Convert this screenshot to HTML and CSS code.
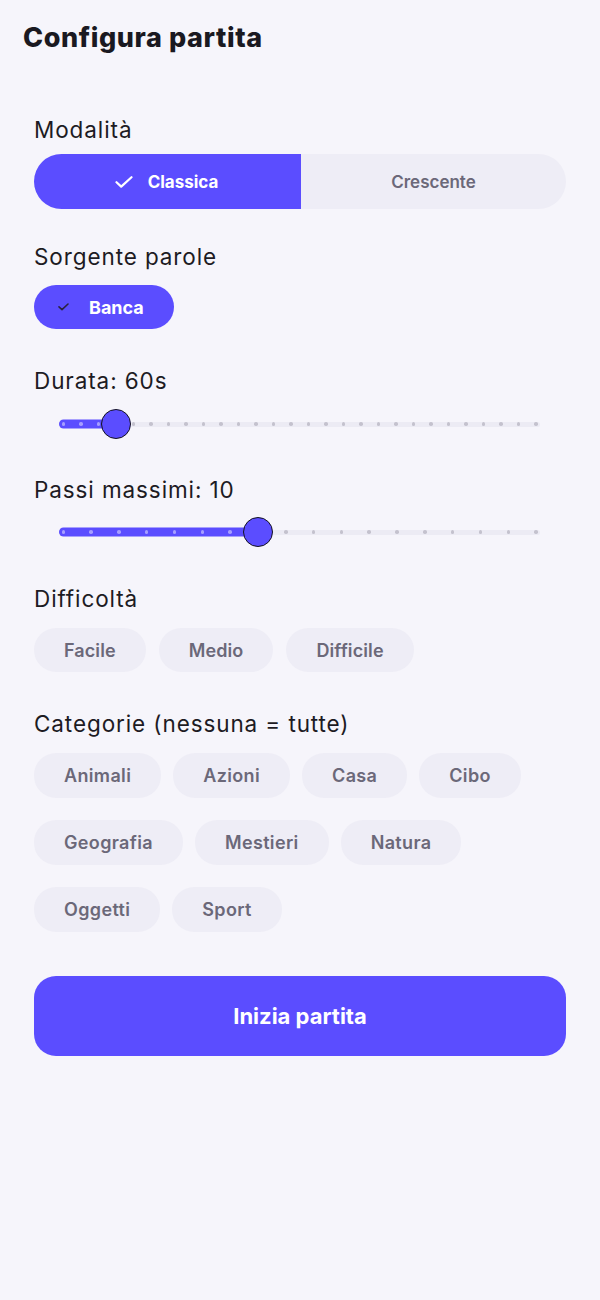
FILE: index.html
```html
<!DOCTYPE html>
<html lang="it">
<head>
<meta charset="utf-8">
<title>Configura partita</title>
<link rel="stylesheet" href="styles.css">
</head>
<body>
<div class="page">
  <h1 class="title">Configura partita</h1>
  <main class="content">
    <section class="sec sec-mode">
      <div class="label">Modalità</div>
      <div class="segmented">
        <div class="seg seg-on">
          <svg class="seg-check" width="18" height="12" viewBox="0 0 18 12"><path d="M1.5 6.2 L6.2 10.6 L16.5 1.2" fill="none" stroke="#fff" stroke-width="2.2" stroke-linecap="round" stroke-linejoin="round"/></svg>
          <span>Classica</span>
        </div>
        <div class="seg">Crescente</div>
      </div>
    </section>

    <section class="sec sec-source">
      <div class="label">Sorgente parole</div>
      <div class="chips">
        <div class="chip chip-on">
          <svg class="chip-check" width="11" height="8" viewBox="0 0 11 8"><path d="M1 3.8 L4 6.6 L10 1" fill="none" stroke="#2b2340" stroke-width="1.6" stroke-linecap="round" stroke-linejoin="round"/></svg>
          <span>Banca</span>
        </div>
      </div>
    </section>

    <section class="sec sec-dur">
      <div class="label">Durata: 60s</div>
      <div class="slider">
        <div class="track">
          <div class="fill" style="width: 57px"></div>
          <div class="ticks">
            <span class="tick on"></span><span class="tick on"></span><span class="tick on"></span><span class="tick"></span><span class="tick"></span><span class="tick"></span><span class="tick"></span><span class="tick"></span><span class="tick"></span><span class="tick"></span><span class="tick"></span><span class="tick"></span><span class="tick"></span><span class="tick"></span><span class="tick"></span><span class="tick"></span><span class="tick"></span><span class="tick"></span><span class="tick"></span><span class="tick"></span><span class="tick"></span><span class="tick"></span><span class="tick"></span><span class="tick"></span><span class="tick"></span><span class="tick"></span><span class="tick"></span><span class="tick"></span>
          </div>
        </div>
        <div class="thumb" style="left: 57px"></div>
      </div>
    </section>

    <section class="sec sec-steps">
      <div class="label">Passi massimi: 10</div>
      <div class="slider">
        <div class="track">
          <div class="fill" style="width: 199px"></div>
          <div class="ticks">
            <span class="tick on"></span><span class="tick on"></span><span class="tick on"></span><span class="tick on"></span><span class="tick on"></span><span class="tick on"></span><span class="tick on"></span><span class="tick"></span><span class="tick"></span><span class="tick"></span><span class="tick"></span><span class="tick"></span><span class="tick"></span><span class="tick"></span><span class="tick"></span><span class="tick"></span><span class="tick"></span><span class="tick"></span>
          </div>
        </div>
        <div class="thumb" style="left: 199px"></div>
      </div>
    </section>

    <section class="sec sec-diff">
      <div class="label">Difficoltà</div>
      <div class="chips chips-diff">
        <div class="chip">Facile</div>
        <div class="chip">Medio</div>
        <div class="chip">Difficile</div>
      </div>
    </section>

    <section class="sec sec-cat">
      <div class="label">Categorie (nessuna = tutte)</div>
      <div class="chips chips-cat">
        <div class="chip">Animali</div>
        <div class="chip">Azioni</div>
        <div class="chip">Casa</div>
        <div class="chip">Cibo</div>
        <div class="chip">Geografia</div>
        <div class="chip">Mestieri</div>
        <div class="chip">Natura</div>
        <div class="chip">Oggetti</div>
        <div class="chip">Sport</div>
      </div>
    </section>

    <button class="start">Inizia partita</button>
  </main>
</div>
</body>
</html>
```
FILE: styles.css
```css
* { box-sizing: border-box; }
html, body {
  margin: 0;
  padding: 0;
  background: #f6f5fb;
}
body {
  font-family: Inter, "Noto Sans", sans-serif;
  color: #1c1b22;
  width: 600px;
  min-height: 1300px;
}
.page {
  padding-top: 22px;
}
.title {
  margin: 0;
  padding-left: 23px;
  font-size: 27px;
  line-height: 32px;
  font-weight: 800;
  color: #1a1921;
  letter-spacing: 0.6px;
}
.content {
  padding: 0 34px;
  margin-top: 62px;
  display: flex;
  flex-direction: column;
}
.label {
  font-size: 22.5px;
  line-height: 28px;
  font-weight: 400;
  color: #1d1b23;
  letter-spacing: 0.9px;
  font-variant-ligatures: none;
}
.sec-source { margin-top: 34px; }
.sec-dur { margin-top: 38px; }
.sec-steps { margin-top: 32px; }
.sec-diff { margin-top: 33px; }
.sec-cat { margin-top: 38px; }

.segmented {
  margin-top: 10px;
  display: flex;
  height: 55px;
  border-radius: 28px;
  overflow: hidden;
  background: #eeedf6;
}
.seg {
  flex: 1;
  display: flex;
  align-items: center;
  justify-content: center;
  font-size: 17px;
  font-weight: 600;
  color: #6b6879;
}
.seg-on {
  background: #5b4dff;
  color: #fff;
  font-weight: 700;
  gap: 15px;
  padding-right: 2px;
}
.seg-check { display: block; }

.chips {
  display: flex;
  flex-wrap: wrap;
}
.sec-source .chips { margin-top: 14px; }
.chips-diff { margin-top: 15px; gap: 13px; }
.chips-cat { margin-top: 15px; gap: 22px 12px; }
.chip {
  height: 44px;
  padding: 0 30px;
  border-radius: 22px;
  background: #eeedf6;
  color: #6b6879;
  font-size: 18px;
  font-weight: 600;
  letter-spacing: 0.35px;
  font-variant-ligatures: none;
  display: inline-flex;
  align-items: center;
}
.chips-diff .chip { letter-spacing: 0.1px; }
.chips-cat .chip { height: 45px; }
.chip-on {
  background: #5b4dff;
  color: #fff;
  font-weight: 700;
  letter-spacing: 0;
  padding: 0 30px 0 24px;
  gap: 20px;
}
.chip-check { display: block; }

.slider {
  position: relative;
  height: 40px;
  margin: 9px 26px 0 25px;
  display: flex;
  align-items: center;
}
.sec-steps .slider { margin-top: 8px; }
.track {
  position: relative;
  width: 100%;
  height: 5px;
  border-radius: 3px;
  background: #ecebf4;
}
.fill {
  position: absolute;
  left: 0;
  top: 50%;
  height: 9px;
  transform: translateY(-50%);
  background: #5b4dff;
  border-radius: 5px 0 0 5px;
}
.ticks {
  position: absolute;
  top: 0;
  bottom: 0;
  left: 2.5px;
  right: 2px;
  display: flex;
  justify-content: space-between;
  align-items: center;
}
.tick {
  width: 3.5px;
  height: 3.5px;
  border-radius: 50%;
  background: #c4c2ce;
}
.tick.on { background: #a69eff; }
.thumb {
  position: absolute;
  top: 50%;
  width: 30px;
  height: 30px;
  border-radius: 50%;
  background: #5b4dff;
  border: 1.5px solid #141220;
  transform: translate(-50%, -50%);
}

.start {
  margin-top: 44px;
  height: 80px;
  width: 100%;
  border: none;
  border-radius: 22px;
  background: #5b4dff;
  color: #fff;
  font-family: Inter, "Noto Sans", sans-serif;
  font-size: 22px;
  font-weight: 700;
  cursor: pointer;
}
```
